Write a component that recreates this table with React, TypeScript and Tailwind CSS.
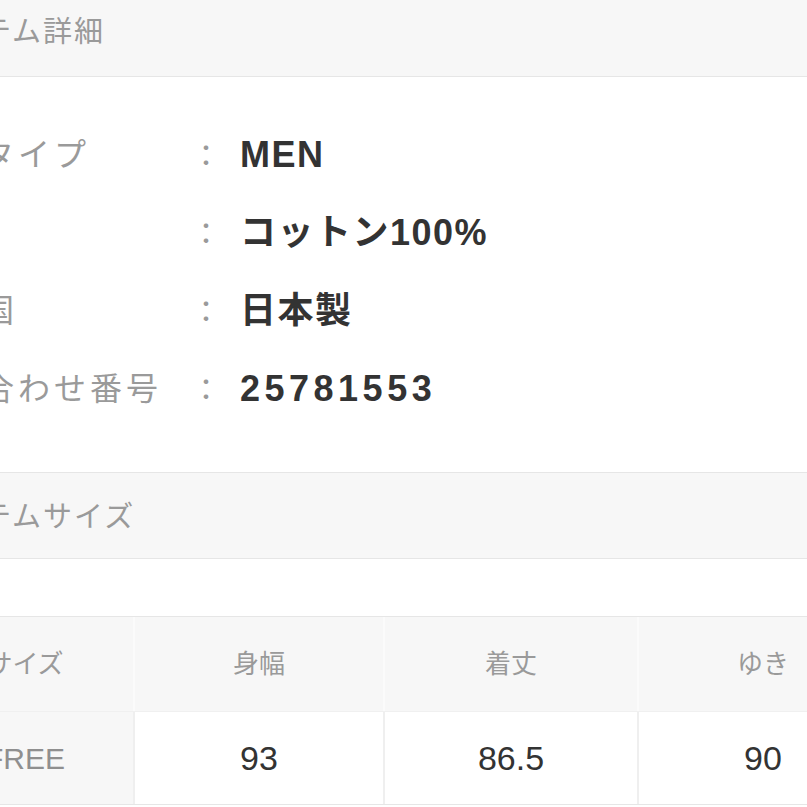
import React from "react";

const FONT = "font-['Liberation_Sans','Noto_Sans_CJK_JP',sans-serif]";

const details = [
  { label: "商品タイプ", value: "MEN", wide: false },
  { label: "素材", value: "コットン100%", wide: false },
  { label: "原産国", value: "日本製", wide: false },
  { label: "問い合わせ番号", value: "25781553", wide: true },
];

const sizeHeaders = ["サイズ", "身幅", "着丈", "ゆき"];
const sizeRow = ["FREE", "93", "86.5", "90"];

const SectionHeader: React.FC<{ title: string; first?: boolean }> = ({
  title,
  first,
}) => (
  <div
    className={`flex items-center bg-[#f7f7f7] border-b border-[#e6e6e6] pl-[22px] ${
      first ? "-mt-[10px] h-[87px]" : "border-t h-[87px] pt-[4px]"
    }`}
  >
    <span className="text-[29px] tracking-[2px] text-[#9a9a9a]">{title}</span>
  </div>
);

export default function App() {
  return (
    <div className={`w-[807px] h-[807px] overflow-hidden bg-white ${FONT}`}>
      <div className="-ml-[100px] w-[1000px]">
        {/* Item details */}
        <SectionHeader title="アイテム詳細" first />

        <div className="pt-[39px] pb-[44px]">
          {details.map((row) => (
            <div
              key={row.label}
              className="grid grid-cols-[291px_49px_1fr] items-center h-[78px]"
            >
              <span className="pl-[10px] text-[32px] tracking-[4px] text-[#9a9a9a] whitespace-nowrap">
                {row.label}
              </span>
              <span className="text-[30px] text-[#9a9a9a]">：</span>
              <span
                className={`text-[36px] font-bold text-[#333333] whitespace-nowrap ${
                  row.wide ? "tracking-[4.5px]" : "tracking-[1.5px]"
                }`}
              >
                {row.value}
              </span>
            </div>
          ))}
        </div>

        {/* Item size */}
        <SectionHeader title="アイテムサイズ" />

        <div className="h-[57px]" />

        <div className="ml-[17px] border-t border-b border-[#e6e6e6]">
          <div className="grid grid-cols-[216px_250px_254px_250px] h-[94px] bg-[#f7f7f7]">
            {sizeHeaders.map((h, i) => (
              <div
                key={h}
                className={`flex items-center justify-center text-[26px] text-[#9a9a9a] ${
                  i > 0 ? "border-l-2 border-[#fbfbfb]" : ""
                }`}
              >
                {h}
              </div>
            ))}
          </div>
          <div className="grid grid-cols-[216px_250px_254px_250px] h-[93px] border-t border-[#f0f0f0]">
            {sizeRow.map((v, i) => (
              <div
                key={i}
                className={
                  i === 0
                    ? "flex items-center justify-center bg-[#f7f7f7] text-[30px] text-[#8f8f8f]"
                    : "flex items-center justify-center bg-white border-l-2 border-[#efefef] text-[34px] text-[#333333]"
                }
              >
                {v}
              </div>
            ))}
          </div>
        </div>
      </div>
    </div>
  );
}
